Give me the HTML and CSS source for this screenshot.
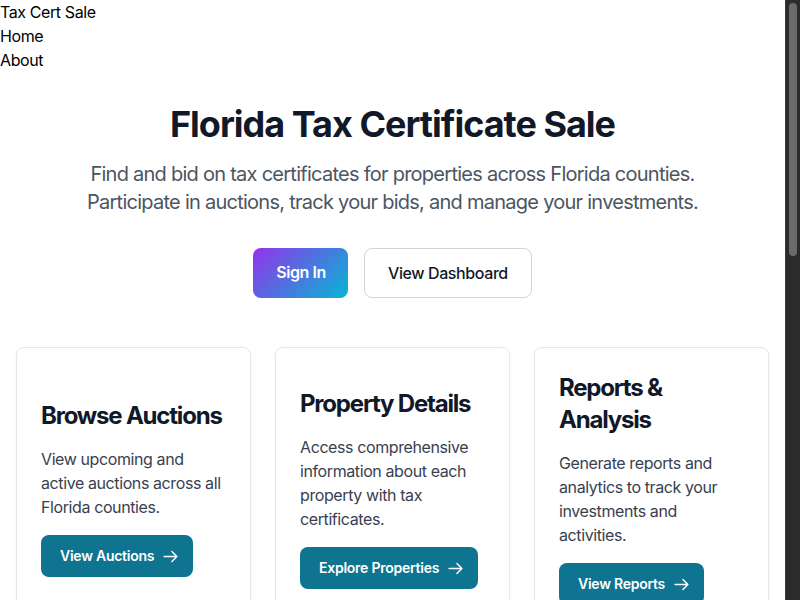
FILE: index.html
```html
<!DOCTYPE html>
<html lang="en">
<head>
<meta charset="utf-8">
<title>Tax Cert Sale</title>
<link rel="stylesheet" href="styles.css">
</head>
<body>
<div class="page">
  <nav class="nav">
    <div class="brand">Tax Cert Sale</div>
    <div class="nav-link">Home</div>
    <div class="nav-link">About</div>
  </nav>
  <main class="main">
    <section class="hero">
      <h1 class="hero-title">Florida Tax Certificate Sale</h1>
      <p class="hero-text">Find and bid on tax certificates for properties across Florida counties. Participate in auctions, track your bids, and manage your investments.</p>
      <div class="hero-actions">
        <a class="btn-gradient">Sign In</a>
        <a class="btn-outline">View Dashboard</a>
      </div>
    </section>
    <section class="cards">
      <div class="card">
        <h2 class="card-title">Browse Auctions</h2>
        <p class="card-text">View upcoming and active auctions across all Florida counties.</p>
        <a class="card-btn">View Auctions
          <svg class="arrow" viewBox="0 0 24 24" fill="none" stroke="currentColor" stroke-width="2" stroke-linecap="round" stroke-linejoin="round"><path d="M3 12h18M14 5l7 7-7 7"/></svg>
        </a>
      </div>
      <div class="card">
        <h2 class="card-title">Property Details</h2>
        <p class="card-text">Access comprehensive information about each property with tax certificates.</p>
        <a class="card-btn">Explore Properties
          <svg class="arrow" viewBox="0 0 24 24" fill="none" stroke="currentColor" stroke-width="2" stroke-linecap="round" stroke-linejoin="round"><path d="M3 12h18M14 5l7 7-7 7"/></svg>
        </a>
      </div>
      <div class="card">
        <h2 class="card-title">Reports &amp; Analysis</h2>
        <p class="card-text">Generate reports and analytics to track your investments and activities.</p>
        <a class="card-btn">View Reports
          <svg class="arrow" viewBox="0 0 24 24" fill="none" stroke="currentColor" stroke-width="2" stroke-linecap="round" stroke-linejoin="round"><path d="M3 12h18M14 5l7 7-7 7"/></svg>
        </a>
      </div>
    </section>
  </main>
</div>
<div class="scrollbar"><div class="scrollbar-thumb"></div></div>
</body>
</html>
```

FILE: styles.css
```css
html {
  background: #ffffff;
}
body {
  margin: 0;
  padding-right: 15px;
  min-height: 1420px;
  font-family: Inter, "Noto Sans", sans-serif;
  color: #000;
}
.scrollbar {
  position: fixed;
  top: 0;
  right: 0;
  bottom: 0;
  width: 14px;
  background: #2b2b2b;
  border-left: 1px solid #3c3c3c;
}
.scrollbar-thumb {
  margin: 3px 3px 0 3px;
  height: 253px;
  border-radius: 4px;
  background: #6b6b6b;
}
.nav {
  font-size: 16px;
  line-height: 24px;
  letter-spacing: -0.4px;
}
.main {
  padding: 0 16px;
}
.hero {
  display: flex;
  flex-direction: column;
  align-items: center;
  text-align: center;
  padding-top: 32px;
}
.hero-title {
  margin: 0 0 16px;
  font-size: 36px;
  line-height: 40px;
  font-weight: 700;
  color: #111827;
  letter-spacing: -1px;
}
.hero-text {
  margin: 0;
  max-width: 672px;
  font-size: 20px;
  line-height: 28px;
  color: #4b5563;
  letter-spacing: -0.74px;
}
.hero-actions {
  display: flex;
  gap: 16px;
  margin-top: 32px;
}
.btn-gradient {
  display: block;
  padding: 12px 22px 12px 23px;
  border-radius: 8px;
  background: linear-gradient(135deg, #9333ea, #06b6d4);
  color: #fff;
  font-size: 16px;
  line-height: 24px;
  font-weight: 600;
  letter-spacing: -0.4px;
}
.btn-outline {
  display: block;
  padding: 12px 23px;
  border: 1px solid #d1d5db;
  border-radius: 8px;
  background: #fff;
  color: #111827;
  font-size: 16px;
  line-height: 24px;
  font-weight: 500;
  letter-spacing: -0.4px;
}
.cards {
  display: grid;
  grid-template-columns: repeat(3, 1fr);
  gap: 24px;
  margin-top: 49px;
}
.card {
  display: flex;
  flex-direction: column;
  justify-content: center;
  align-items: flex-start;
  padding: 24px;
  border: 1px solid #e5e7eb;
  border-radius: 8px;
  background: #fff;
  box-shadow: 0 1px 3px rgba(0, 0, 0, 0.06);
}
.card-title {
  margin: 0 0 15px;
  font-size: 24px;
  line-height: 32px;
  font-weight: 700;
  color: #111827;
  letter-spacing: -1.2px;
}
.card-text {
  margin: 0 0 16px;
  font-size: 16px;
  line-height: 24px;
  color: #374151;
  letter-spacing: -0.4px;
}
.card-btn {
  display: inline-flex;
  align-items: center;
  gap: 8px;
  padding: 11px 14px 11px 19px;
  border-radius: 8px;
  background: #0e7490;
  color: #fff;
  font-size: 14px;
  line-height: 20px;
  font-weight: 600;
  letter-spacing: -0.25px;
}
.arrow {
  width: 17px;
  height: 17px;
}
```
